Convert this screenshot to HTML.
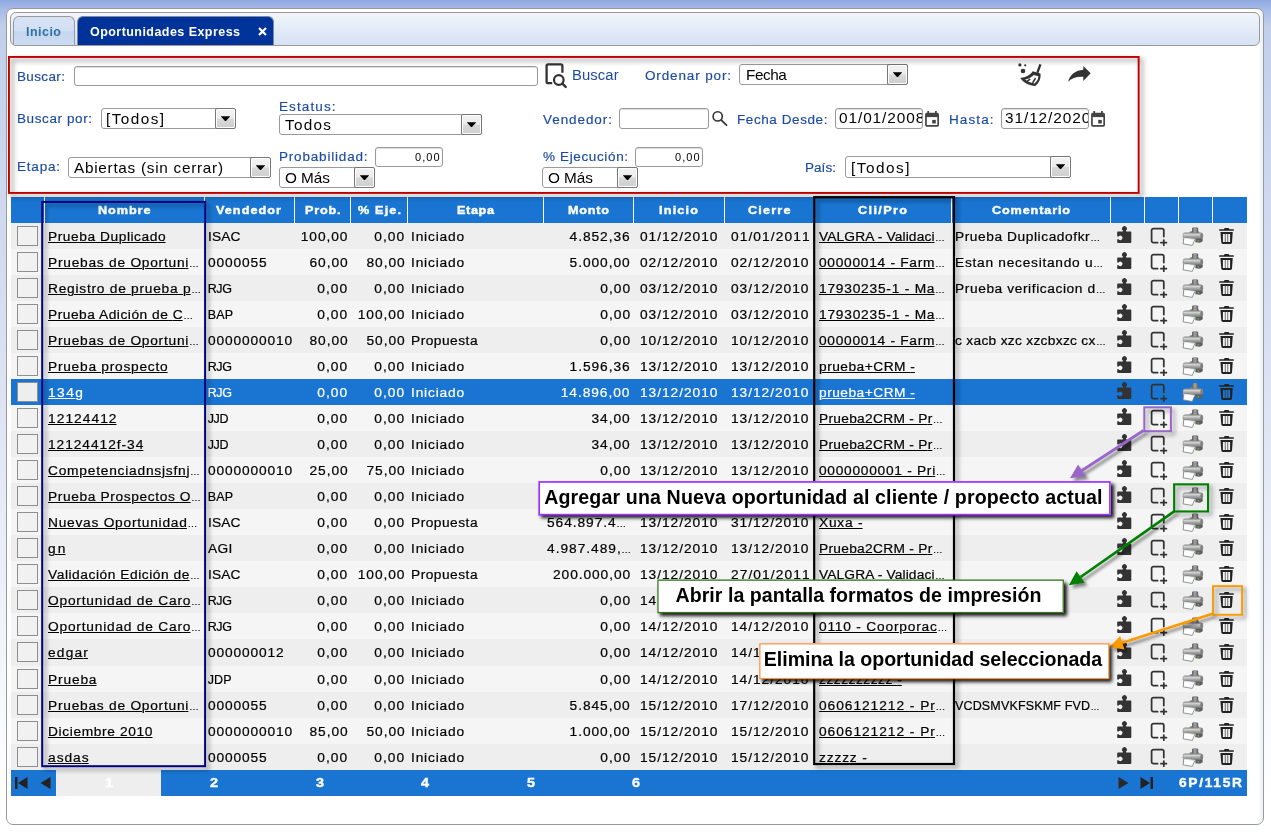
<!DOCTYPE html><html><head><meta charset="utf-8"><title>Oportunidades Express</title><style>
*{box-sizing:border-box;margin:0;padding:0}
html,body{width:1271px;height:832px;overflow:hidden}
body{position:relative;font-family:"Liberation Sans",sans-serif;font-size:12px;color:#000;
 background:linear-gradient(to bottom,#8ea8e1 0px,#a9bce7 10px,#c2cfea 26px,#cfd8ee 200px,#dfe5f4 420px,#f3f5fb 650px,#fff 800px)}
.t{position:absolute;white-space:nowrap;display:block}
.abs{position:absolute}
#panel{position:absolute;left:6px;top:8px;width:1258px;height:817px;background:#fff;border:1px solid #999;border-radius:7px;
 box-shadow:inset -5px 0 3px -2px #eef2f8}
#tabbar{position:absolute;left:10px;top:12px;width:1250px;height:34px;border:1px solid #999;border-radius:6px;
 background:linear-gradient(#f1f5fb,#d6e2f4)}
.tab{position:absolute;top:16px;height:29px;border-radius:6px 6px 0 0}
#tab1{left:13px;width:62px;border:1px solid #999;border-bottom:none;background:linear-gradient(#d7e3f5 0,#d2dff3 48%,#c5d6f0 52%,#cddbf2 100%)}
#tab2{left:77px;width:197px;background:#003399;border:1px solid #7a8aa8;border-bottom:none}
.inp{position:absolute;background:#fff;border:1px solid #9a9a9a;border-radius:3px;box-shadow:inset 0 1px 1px #ddd}
.sel{position:absolute;background:#fff;border:1px solid #9a9a9a;border-radius:3px}
.sel i{position:absolute;right:-1px;top:-1px;bottom:-1px;width:21px;border:1px solid #777;border-right:1.500px solid #777;border-bottom:1.500px solid #777;border-radius:2px;background:linear-gradient(#f3f3f3 0,#ececec 48%,#d9d9d9 52%,#cecece 100%);
 box-shadow:inset 0 0 0 1px #fff}
.sel i:after{content:"";position:absolute;left:4.700px;top:7.300px;width:9.600px;height:5.200px;background:#000;clip-path:polygon(0 0,100% 0,50% 100%)}
.ann{position:absolute;filter:drop-shadow(3px 3px 2px rgba(0,0,0,.45))}
#hdr{position:absolute;left:11px;top:197px;width:1236px;height:26px;background:#1a75d2}
.sep{position:absolute;top:197px;width:1px;height:26px;background:#fff}
.row{position:absolute;left:11px;width:1236px;height:27px}
.r0{background:#eeeeee}.r1{background:#f5f5f5}.rs{background:#1a75d2;color:#fff}
.c{position:absolute;top:1px;height:27px;line-height:27px;white-space:nowrap;font-size:12.5px;-webkit-text-stroke:.2px;transform:scaleX(1.1);transform-origin:0 0}
.cb{position:absolute;left:6px;top:3px;width:21px;height:20px;border:1px solid #8e8e8e;background:#f1f1f1}
.e{font-size:9px;letter-spacing:0;margin-left:.5px}
.z{letter-spacing:0}
.u{text-decoration:underline;text-underline-offset:.5px;text-decoration-thickness:1px}
.callout{position:absolute;background:#fff;box-shadow:3px 3px 3.500px rgba(0,0,0,.9)}
#pag{position:absolute;left:11px;top:770px;width:1236px;height:26px;background:#1a75d2}
svg{position:absolute;overflow:visible}
#root{position:absolute;left:0;top:0;width:1271px;height:832px;will-change:transform}
</style></head><body><div id="root">
<svg width="0" height="0" style="position:absolute"><defs>
<linearGradient id="pg1" x1="0" y1="0" x2="0" y2="1"><stop offset="0" stop-color="#d8d8d8"/><stop offset="1" stop-color="#8d8d8d"/></linearGradient>
<linearGradient id="pg2" x1="0" y1="0" x2="1" y2="0"><stop offset="0" stop-color="#f2f2f2"/><stop offset="1" stop-color="#9a9a9a"/></linearGradient>
<linearGradient id="kg" x1="0" y1="0" x2="1" y2="0"><stop offset="0" stop-color="#5e5e5e"/><stop offset=".5" stop-color="#a8a8a8"/><stop offset="1" stop-color="#5a5a5a"/></linearGradient>
<linearGradient id="bg" x1="0" y1="0" x2="0" y2="1"><stop offset="0" stop-color="#9a9a9a"/><stop offset=".28" stop-color="#d2d2d2"/><stop offset=".65" stop-color="#a2a2a2"/><stop offset="1" stop-color="#7c7c7c"/></linearGradient>
<symbol id="puz" viewBox="0 0 36 26"><path fill="#333" d="M8 7.400H12.900V6.600A2.450 2.450 0 1 1 16 6.600V7.400H20.500A.8.8 0 0 1 21.300 8.200V18.200A.8.8 0 0 1 20.500 19H8A.8.8 0 0 1 7.200 18.200V15.300H8.600A2.200 2.200 0 1 0 8.600 12.500H7.200V8.200A.8.8 0 0 1 8 7.400Z"/></symbol>
<symbol id="new" viewBox="0 0 36 26"><path fill="none" stroke="#333" stroke-width="1.750" stroke-linecap="round" d="M20.800 12.600V6.300A1.800 1.800 0 0 0 19 4.500H10.400A1.800 1.800 0 0 0 8.600 6.300V16.850A1.800 1.800 0 0 0 10.400 18.650H14.600M20.800 16V21.200M17.900 18.650H23.400"/></symbol>
<symbol id="prn" viewBox="0 0 36 26">
 <path fill="#7a7a7a" d="M13 9.200L14.500 7.200H22.500L23.500 9.200Z"/>
 <path fill="url(#kg)" d="M16 8.800V4.600Q16 3 19.100 3Q22.200 3 22.200 4.600V8.800Z"/>
 <rect x="7" y="8.800" width="19.800" height="6" rx="2" fill="url(#bg)" stroke="#808080" stroke-width=".5"/>
 <ellipse cx="25.600" cy="11.800" rx="1.300" ry="2.900" fill="#7d7d7d"/>
 <path fill="#5f5f5f" d="M19.400 14.500H26.700V17.300L24 18.800L19.400 18.200Z"/>
 <rect x="21.700" y="16.100" width="1.300" height="1.500" fill="#6dbb3c"/>
 <path fill="#b5b5b5" d="M7 13H8.200V20H7Z"/>
 <path fill="#fdfdfd" stroke="#7c7c7c" stroke-width=".8" d="M7.900 13.500L19 15L16.300 21.400L7.100 19.900Z"/>
 <path fill="#e3e3e3" d="M8.300 13.700L18.700 15.100L18.300 16L8.300 14.600Z"/>
</symbol>
<symbol id="tr" viewBox="0 0 36 26">
 <path fill="#222" d="M15 5.300Q15 4.050 16.200 4.050H19.100Q20.300 4.050 20.300 5.300H24.300Q24.850 5.300 24.850 5.850V6.700H10.150V5.850Q10.150 5.300 10.700 5.300Z"/>
 <path fill="#222" fill-rule="evenodd" d="M11.400 8.100H23.750L23 18.600Q22.900 20 21.500 20H13.800Q12.400 20 12.300 18.600ZM13.900 10V18H21.100V10Z"/>
 <path fill="#333" fill-opacity=".75" d="M15.800 10H16.700V18H15.800ZM18.300 10H19.200V18H18.300Z"/>
</symbol>
<symbol id="cal" viewBox="0 0 20 20"><path fill="#444" d="M2.300 0.100h1.800v2h-1.800zM10 0.100h1.800v2H10z"/><rect x="0.100" y="1.850" width="13.900" height="13.850" rx="1.600" fill="#444"/><rect x="1.800" y="6.100" width="10.500" height="7.900" fill="#fff"/><rect x="7.200" y="8.900" width="3.600" height="3.600" fill="#444"/></symbol>
</defs></svg>
<div id="panel"></div><div id="tabbar"></div>
<div class="tab" id="tab1"></div><div class="tab" id="tab2"></div>
<span class="t" style="left:26.0px;top:21.9px;font-size:12.5px;line-height:20px;color:#2e73a6;letter-spacing:0.47px;font-weight:bold;">Inicio</span>
<span class="t" style="left:90.0px;top:21.9px;font-size:12.5px;line-height:20px;color:#fff;letter-spacing:0.45px;font-weight:bold;">Oportunidades Express</span>
<svg style="left:258px;top:27px" width="9" height="9" viewBox="0 0 9 9"><path d="M1 1l7 7M8 1l-7 7" stroke="#fff" stroke-width="2.200"/></svg>
<span class="t" style="left:17.0px;top:66.7px;font-size:12.5px;line-height:20px;color:#1c4aa2;letter-spacing:0.34px;transform:scaleX(1.08);transform-origin:0 0;-webkit-text-stroke:.15px;">Buscar:</span>
<div class="inp" style="left:74px;top:66px;width:464px;height:20px"></div>
<svg style="left:536px;top:58px" width="34" height="32" viewBox="0 0 34 32"><path fill="none" stroke="#333" stroke-width="2.300" stroke-linejoin="round" d="M26.400 14.800V7.800A1.500 1.500 0 0 0 24.900 6.300H12.100A1.500 1.500 0 0 0 10.600 7.800V23.700A1.500 1.500 0 0 0 12.100 25.200H16.200"/><circle cx="22.800" cy="22" r="4.800" fill="none" stroke="#333" stroke-width="2.200"/><path d="M26.400 25.600L29.700 28.900" stroke="#333" stroke-width="2.400" stroke-linecap="round"/></svg>
<span class="t" style="left:572.0px;top:64.6px;font-size:14px;line-height:20px;color:#1c4aa2;letter-spacing:0.08px;transform:scaleX(1.06);transform-origin:0 0;">Buscar</span>
<span class="t" style="left:645.0px;top:65.7px;font-size:12.5px;line-height:20px;color:#1c4aa2;letter-spacing:0.80px;transform:scaleX(1.08);transform-origin:0 0;-webkit-text-stroke:.15px;">Ordenar por:</span>
<div class="sel" style="left:739px;top:64px;width:169px;height:21px"><i></i></div>
<span class="t" style="left:745.6px;top:65.1px;font-size:14.2px;line-height:20px;color:#000;letter-spacing:-0.41px;transform:scaleX(1.08);transform-origin:0 0;">Fecha</span>
<svg style="left:1010px;top:58px" width="90" height="34" viewBox="0 0 90 34"><g fill="#333">
<circle cx="9.900" cy="6.900" r="1.600"/><circle cx="15.200" cy="7.300" r="1.100"/><circle cx="13" cy="13" r="2.300"/>
<path d="M29.300 5.900L31.500 6.700L28.400 15.200L26.200 14.400Z"/>
<path fill-rule="evenodd" d="M22.700 13.300L30.400 15.400C31.300 20 29 25 25.300 27.900C19 27.600 13.500 24.600 10.300 19.900C16 19.500 20.500 17 22.700 13.300ZM23.800 17C21.700 19.300 18.400 20.900 15 21.600C17 23.400 20.700 25 24.600 25.400C27 23.400 28.500 20.700 28.300 18.200Z"/>
<path d="M19.600 20.600L20.800 21.600L17 24.600L15.600 23.600ZM24.800 19.800L26.200 20.500L23.300 25.200L21.900 24.500Z"/>
<path d="M73.300 8.100L80.700 15.200L73.300 23V18.800C67 18.300 62 20 58.100 23.700C60 16.500 65.500 12.300 73.300 11.700Z"/></g></svg>
<span class="t" style="left:17.0px;top:109.2px;font-size:12.5px;line-height:20px;color:#1c4aa2;letter-spacing:0.55px;transform:scaleX(1.08);transform-origin:0 0;-webkit-text-stroke:.15px;">Buscar por:</span>
<div class="sel" style="left:101px;top:108px;width:135px;height:21px"><i></i></div>
<span class="t" style="left:106.0px;top:109.4px;font-size:14.2px;line-height:20px;color:#000;letter-spacing:1.33px;transform:scaleX(1.08);transform-origin:0 0;">[Todos]</span>
<span class="t" style="left:279.0px;top:96.7px;font-size:12.5px;line-height:20px;color:#1c4aa2;letter-spacing:1.02px;transform:scaleX(1.08);transform-origin:0 0;-webkit-text-stroke:.15px;">Estatus:</span>
<div class="sel" style="left:279px;top:114px;width:203px;height:21px"><i></i></div>
<span class="t" style="left:285.0px;top:115.1px;font-size:14.2px;line-height:20px;color:#000;letter-spacing:1.18px;transform:scaleX(1.08);transform-origin:0 0;">Todos</span>
<span class="t" style="left:542.5px;top:109.7px;font-size:12.5px;line-height:20px;color:#1c4aa2;letter-spacing:0.86px;transform:scaleX(1.08);transform-origin:0 0;-webkit-text-stroke:.15px;">Vendedor:</span>
<div class="inp" style="left:619px;top:108px;width:90px;height:21px"></div>
<svg style="left:700px;top:104px" width="34" height="30" viewBox="0 0 34 30"><circle cx="17.700" cy="12.400" r="4.600" fill="none" stroke="#333" stroke-width="1.600"/><path d="M21.300 16.200L26.500 21.200" stroke="#333" stroke-width="1.800" stroke-linecap="round"/></svg>
<span class="t" style="left:737.0px;top:109.7px;font-size:12.5px;line-height:20px;color:#1c4aa2;letter-spacing:0.54px;transform:scaleX(1.08);transform-origin:0 0;-webkit-text-stroke:.15px;">Fecha Desde:</span>
<div class="inp" style="left:835px;top:108px;width:88px;height:21px;overflow:hidden"></div>
<div class="abs" style="left:836px;top:109px;width:86px;height:19px;overflow:hidden"><span class="t" style="left:2.7px;top:-0.6px;font-size:14px;line-height:20px;color:#000;letter-spacing:0.83px;transform:scaleX(1.1);transform-origin:0 0;">01/01/2008</span></div>
<svg style="left:925px;top:111px" width="20" height="20"><use href="#cal"/></svg>
<span class="t" style="left:949.0px;top:109.7px;font-size:12.5px;line-height:20px;color:#1c4aa2;letter-spacing:1.02px;transform:scaleX(1.08);transform-origin:0 0;-webkit-text-stroke:.15px;">Hasta:</span>
<div class="inp" style="left:1001px;top:108px;width:88px;height:21px"></div>
<div class="abs" style="left:1002px;top:109px;width:86px;height:19px;overflow:hidden"><span class="t" style="left:2.7px;top:-0.6px;font-size:14px;line-height:20px;color:#000;letter-spacing:0.83px;transform:scaleX(1.1);transform-origin:0 0;">31/12/2020</span></div>
<svg style="left:1091px;top:111px" width="20" height="20"><use href="#cal"/></svg>
<span class="t" style="left:17.0px;top:157.2px;font-size:12.5px;line-height:20px;color:#1c4aa2;letter-spacing:0.74px;transform:scaleX(1.08);transform-origin:0 0;-webkit-text-stroke:.15px;">Etapa:</span>
<div class="sel" style="left:68px;top:157px;width:203px;height:21px"><i></i></div>
<span class="t" style="left:74.0px;top:158.1px;font-size:14.2px;line-height:20px;color:#000;letter-spacing:0.67px;transform:scaleX(1.08);transform-origin:0 0;">Abiertas (sin cerrar)</span>
<span class="t" style="left:279.0px;top:146.7px;font-size:12.5px;line-height:20px;color:#1c4aa2;letter-spacing:0.75px;transform:scaleX(1.08);transform-origin:0 0;-webkit-text-stroke:.15px;">Probabilidad:</span>
<div class="inp" style="left:375px;top:147px;width:68px;height:20px"></div>
<span class="t" style="left:415.0px;top:147.2px;font-size:11px;line-height:20px;color:#000;letter-spacing:1.03px;">0,00</span>
<div class="sel" style="left:279px;top:167px;width:96px;height:21px"><i></i></div>
<span class="t" style="left:285.0px;top:167.6px;font-size:14.2px;line-height:20px;color:#000;letter-spacing:-0.03px;transform:scaleX(1.08);transform-origin:0 0;">O Más</span>
<span class="t" style="left:542.5px;top:146.7px;font-size:12.5px;line-height:20px;color:#1c4aa2;letter-spacing:0.59px;transform:scaleX(1.08);transform-origin:0 0;-webkit-text-stroke:.15px;">% Ejecución:</span>
<div class="inp" style="left:635px;top:147px;width:68px;height:20px"></div>
<span class="t" style="left:675.0px;top:147.2px;font-size:11px;line-height:20px;color:#000;letter-spacing:1.03px;">0,00</span>
<div class="sel" style="left:542px;top:167px;width:96px;height:21px"><i></i></div>
<span class="t" style="left:548.0px;top:167.6px;font-size:14.2px;line-height:20px;color:#000;letter-spacing:-0.03px;transform:scaleX(1.08);transform-origin:0 0;">O Más</span>
<span class="t" style="left:805.0px;top:157.7px;font-size:12.5px;line-height:20px;color:#1c4aa2;letter-spacing:0.05px;transform:scaleX(1.08);transform-origin:0 0;-webkit-text-stroke:.15px;">País:</span>
<div class="sel" style="left:845px;top:156px;width:226px;height:22px"><i></i></div>
<span class="t" style="left:850.5px;top:157.9px;font-size:14.2px;line-height:20px;color:#000;letter-spacing:1.40px;transform:scaleX(1.08);transform-origin:0 0;">[Todos]</span>
<div id="hdr"></div>
<div class="sep" style="left:44px"></div>
<div class="sep" style="left:203.5px"></div>
<div class="sep" style="left:294px"></div>
<div class="sep" style="left:350px"></div>
<div class="sep" style="left:407px"></div>
<div class="sep" style="left:543px"></div>
<div class="sep" style="left:633px"></div>
<div class="sep" style="left:724px"></div>
<div class="sep" style="left:813px"></div>
<div class="sep" style="left:950.5px"></div>
<div class="sep" style="left:1110px"></div>
<div class="sep" style="left:1144px"></div>
<div class="sep" style="left:1178px"></div>
<div class="sep" style="left:1212px"></div>
<span class="t" style="left:97.7px;top:199.7px;font-size:11px;line-height:20px;color:#fff;letter-spacing:0.82px;font-weight:bold;transform:scaleX(1.15);transform-origin:0 0;-webkit-text-stroke:.4px #fff;">Nombre</span>
<span class="t" style="left:216.0px;top:199.7px;font-size:11px;line-height:20px;color:#fff;letter-spacing:0.91px;font-weight:bold;transform:scaleX(1.15);transform-origin:0 0;-webkit-text-stroke:.4px #fff;">Vendedor</span>
<span class="t" style="left:304.5px;top:199.7px;font-size:11px;line-height:20px;color:#fff;letter-spacing:0.69px;font-weight:bold;transform:scaleX(1.15);transform-origin:0 0;-webkit-text-stroke:.4px #fff;">Prob.</span>
<span class="t" style="left:357.5px;top:199.7px;font-size:11px;line-height:20px;color:#fff;letter-spacing:1.00px;font-weight:bold;transform:scaleX(1.15);transform-origin:0 0;-webkit-text-stroke:.4px #fff;">% Eje.</span>
<span class="t" style="left:456.5px;top:199.7px;font-size:11px;line-height:20px;color:#fff;letter-spacing:0.55px;font-weight:bold;transform:scaleX(1.15);transform-origin:0 0;-webkit-text-stroke:.4px #fff;">Etapa</span>
<span class="t" style="left:568.0px;top:199.7px;font-size:11px;line-height:20px;color:#fff;letter-spacing:0.67px;font-weight:bold;transform:scaleX(1.15);transform-origin:0 0;-webkit-text-stroke:.4px #fff;">Monto</span>
<span class="t" style="left:659.0px;top:199.7px;font-size:11px;line-height:20px;color:#fff;letter-spacing:1.04px;font-weight:bold;transform:scaleX(1.15);transform-origin:0 0;-webkit-text-stroke:.4px #fff;">Inicio</span>
<span class="t" style="left:747.5px;top:199.7px;font-size:11px;line-height:20px;color:#fff;letter-spacing:1.03px;font-weight:bold;transform:scaleX(1.15);transform-origin:0 0;-webkit-text-stroke:.4px #fff;">Cierre</span>
<span class="t" style="left:858.0px;top:199.7px;font-size:11px;line-height:20px;color:#fff;letter-spacing:1.19px;font-weight:bold;transform:scaleX(1.15);transform-origin:0 0;-webkit-text-stroke:.4px #fff;">Cli/Pro</span>
<span class="t" style="left:991.5px;top:199.7px;font-size:11px;line-height:20px;color:#fff;letter-spacing:0.75px;font-weight:bold;transform:scaleX(1.15);transform-origin:0 0;-webkit-text-stroke:.4px #fff;">Comentario</span>
<div class="row r0" style="top:223.00px"><div class="cb"></div><div class="c" style="left:36.7px;letter-spacing:0.50px;"><span class="u">Prueba Duplicad<span class="z">o</span></span></div><div class="c" style="left:196.8px;letter-spacing:0.12px;">ISA<span class="z">C</span></div><div class="c" style="right:899.7px;letter-spacing:0.83px;transform-origin:100% 0;">100,0<span class="z">0</span></div><div class="c" style="right:842.6px;letter-spacing:0.91px;transform-origin:100% 0;">0,0<span class="z">0</span></div><div class="c" style="left:399.7px;letter-spacing:0.75px;">Iniciad<span class="z">o</span></div><div class="c" style="right:617.2px;letter-spacing:0.87px;transform-origin:100% 0;">4.852,3<span class="z">6</span></div><div class="c" style="left:629.0px;letter-spacing:0.87px;">01/12/201<span class="z">0</span></div><div class="c" style="left:720.2px;letter-spacing:0.98px;">01/01/201<span class="z">1</span></div><div class="c" style="left:807.8px;letter-spacing:0.12px;"><span class="u">VALGRA - Validac<span class="z">i</span></span><span class="e">…</span></div><div class="c" style="left:944.0px;letter-spacing:0.51px;"><span>Prueba Duplicadofk<span class="z">r</span></span><span class="e">…</span></div><svg style="left:1099px;top:1px" width="36" height="26"><use href="#puz"/></svg><svg style="left:1132px;top:1px" width="36" height="26"><use href="#new"/></svg><svg style="left:1165px;top:1px" width="36" height="26"><use href="#prn"/></svg><svg style="left:1198px;top:1px" width="36" height="26"><use href="#tr"/></svg></div>
<div class="row r1" style="top:249.03px"><div class="cb"></div><div class="c" style="left:36.7px;letter-spacing:0.68px;"><span class="u">Pruebas de Oportun<span class="z">i</span></span><span class="e">…</span></div><div class="c" style="left:196.8px;letter-spacing:0.77px;">000005<span class="z">5</span></div><div class="c" style="right:899.7px;letter-spacing:0.86px;transform-origin:100% 0;">60,0<span class="z">0</span></div><div class="c" style="right:842.6px;letter-spacing:0.86px;transform-origin:100% 0;">80,0<span class="z">0</span></div><div class="c" style="left:399.7px;letter-spacing:0.75px;">Iniciad<span class="z">o</span></div><div class="c" style="right:617.2px;letter-spacing:0.87px;transform-origin:100% 0;">5.000,0<span class="z">0</span></div><div class="c" style="left:629.0px;letter-spacing:0.87px;">02/12/201<span class="z">0</span></div><div class="c" style="left:720.2px;letter-spacing:0.87px;">02/12/201<span class="z">0</span></div><div class="c" style="left:807.8px;letter-spacing:0.65px;"><span class="u">00000014 - Far<span class="z">m</span></span><span class="e">…</span></div><div class="c" style="left:944.0px;letter-spacing:0.66px;"><span>Estan necesitando <span class="z">u</span></span><span class="e">…</span></div><svg style="left:1099px;top:1px" width="36" height="26"><use href="#puz"/></svg><svg style="left:1132px;top:1px" width="36" height="26"><use href="#new"/></svg><svg style="left:1165px;top:1px" width="36" height="26"><use href="#prn"/></svg><svg style="left:1198px;top:1px" width="36" height="26"><use href="#tr"/></svg></div>
<div class="row r0" style="top:275.06px"><div class="cb"></div><div class="c" style="left:36.7px;letter-spacing:0.68px;"><span class="u">Registro de prueba <span class="z">p</span></span><span class="e">…</span></div><div class="c" style="left:196.8px;letter-spacing:-0.45px;transform:none;">RJ<span class="z">G</span></div><div class="c" style="right:899.7px;letter-spacing:0.91px;transform-origin:100% 0;">0,0<span class="z">0</span></div><div class="c" style="right:842.6px;letter-spacing:0.91px;transform-origin:100% 0;">0,0<span class="z">0</span></div><div class="c" style="left:399.7px;letter-spacing:0.75px;">Iniciad<span class="z">o</span></div><div class="c" style="right:617.2px;letter-spacing:0.91px;transform-origin:100% 0;">0,0<span class="z">0</span></div><div class="c" style="left:629.0px;letter-spacing:0.87px;">03/12/201<span class="z">0</span></div><div class="c" style="left:720.2px;letter-spacing:0.87px;">03/12/201<span class="z">0</span></div><div class="c" style="left:807.8px;letter-spacing:0.70px;"><span class="u">17930235-1 - M<span class="z">a</span></span><span class="e">…</span></div><div class="c" style="left:944.0px;letter-spacing:0.53px;"><span>Prueba verificacion <span class="z">d</span></span><span class="e">…</span></div><svg style="left:1099px;top:1px" width="36" height="26"><use href="#puz"/></svg><svg style="left:1132px;top:1px" width="36" height="26"><use href="#new"/></svg><svg style="left:1165px;top:1px" width="36" height="26"><use href="#prn"/></svg><svg style="left:1198px;top:1px" width="36" height="26"><use href="#tr"/></svg></div>
<div class="row r1" style="top:301.09px"><div class="cb"></div><div class="c" style="left:36.7px;letter-spacing:0.47px;"><span class="u">Prueba Adición de <span class="z">C</span></span><span class="e">…</span></div><div class="c" style="left:196.8px;letter-spacing:0.18px;transform:none;">BA<span class="z">P</span></div><div class="c" style="right:899.7px;letter-spacing:0.91px;transform-origin:100% 0;">0,0<span class="z">0</span></div><div class="c" style="right:842.6px;letter-spacing:0.83px;transform-origin:100% 0;">100,0<span class="z">0</span></div><div class="c" style="left:399.7px;letter-spacing:0.75px;">Iniciad<span class="z">o</span></div><div class="c" style="right:617.2px;letter-spacing:0.91px;transform-origin:100% 0;">0,0<span class="z">0</span></div><div class="c" style="left:629.0px;letter-spacing:0.87px;">03/12/201<span class="z">0</span></div><div class="c" style="left:720.2px;letter-spacing:0.87px;">03/12/201<span class="z">0</span></div><div class="c" style="left:807.8px;letter-spacing:0.70px;"><span class="u">17930235-1 - M<span class="z">a</span></span><span class="e">…</span></div><svg style="left:1099px;top:1px" width="36" height="26"><use href="#puz"/></svg><svg style="left:1132px;top:1px" width="36" height="26"><use href="#new"/></svg><svg style="left:1165px;top:1px" width="36" height="26"><use href="#prn"/></svg><svg style="left:1198px;top:1px" width="36" height="26"><use href="#tr"/></svg></div>
<div class="row r0" style="top:327.12px"><div class="cb"></div><div class="c" style="left:36.7px;letter-spacing:0.68px;"><span class="u">Pruebas de Oportun<span class="z">i</span></span><span class="e">…</span></div><div class="c" style="left:196.8px;letter-spacing:0.77px;">000000001<span class="z">0</span></div><div class="c" style="right:899.7px;letter-spacing:0.86px;transform-origin:100% 0;">80,0<span class="z">0</span></div><div class="c" style="right:842.6px;letter-spacing:0.86px;transform-origin:100% 0;">50,0<span class="z">0</span></div><div class="c" style="left:399.7px;letter-spacing:0.44px;">Propuest<span class="z">a</span></div><div class="c" style="right:617.2px;letter-spacing:0.91px;transform-origin:100% 0;">0,0<span class="z">0</span></div><div class="c" style="left:629.0px;letter-spacing:0.87px;">10/12/201<span class="z">0</span></div><div class="c" style="left:720.2px;letter-spacing:0.87px;">10/12/201<span class="z">0</span></div><div class="c" style="left:807.8px;letter-spacing:0.65px;"><span class="u">00000014 - Far<span class="z">m</span></span><span class="e">…</span></div><div class="c" style="left:944.0px;letter-spacing:0.27px;"><span>c xacb xzc xzcbxzc c<span class="z">x</span></span><span class="e">…</span></div><svg style="left:1099px;top:1px" width="36" height="26"><use href="#puz"/></svg><svg style="left:1132px;top:1px" width="36" height="26"><use href="#new"/></svg><svg style="left:1165px;top:1px" width="36" height="26"><use href="#prn"/></svg><svg style="left:1198px;top:1px" width="36" height="26"><use href="#tr"/></svg></div>
<div class="row r1" style="top:353.15px"><div class="cb"></div><div class="c" style="left:36.7px;letter-spacing:0.67px;"><span class="u">Prueba prospect<span class="z">o</span></span></div><div class="c" style="left:196.8px;letter-spacing:-0.45px;transform:none;">RJ<span class="z">G</span></div><div class="c" style="right:899.7px;letter-spacing:0.91px;transform-origin:100% 0;">0,0<span class="z">0</span></div><div class="c" style="right:842.6px;letter-spacing:0.91px;transform-origin:100% 0;">0,0<span class="z">0</span></div><div class="c" style="left:399.7px;letter-spacing:0.75px;">Iniciad<span class="z">o</span></div><div class="c" style="right:617.2px;letter-spacing:0.87px;transform-origin:100% 0;">1.596,3<span class="z">6</span></div><div class="c" style="left:629.0px;letter-spacing:0.87px;">13/12/201<span class="z">0</span></div><div class="c" style="left:720.2px;letter-spacing:0.87px;">13/12/201<span class="z">0</span></div><div class="c" style="left:807.8px;letter-spacing:0.44px;"><span class="u">prueba+CRM <span class="z">-</span></span></div><svg style="left:1099px;top:1px" width="36" height="26"><use href="#puz"/></svg><svg style="left:1132px;top:1px" width="36" height="26"><use href="#new"/></svg><svg style="left:1165px;top:1px" width="36" height="26"><use href="#prn"/></svg><svg style="left:1198px;top:1px" width="36" height="26"><use href="#tr"/></svg></div>
<div class="row rs" style="top:379.18px"><div class="cb" style="background:#eee"></div><div class="c" style="left:36.7px;letter-spacing:1.31px;"><span class="u">134<span class="z">g</span></span></div><div class="c" style="left:196.8px;letter-spacing:-0.45px;transform:none;">RJ<span class="z">G</span></div><div class="c" style="right:899.7px;letter-spacing:0.91px;transform-origin:100% 0;">0,0<span class="z">0</span></div><div class="c" style="right:842.6px;letter-spacing:0.91px;transform-origin:100% 0;">0,0<span class="z">0</span></div><div class="c" style="left:399.7px;letter-spacing:0.75px;">Iniciad<span class="z">o</span></div><div class="c" style="right:617.2px;letter-spacing:0.85px;transform-origin:100% 0;">14.896,0<span class="z">0</span></div><div class="c" style="left:629.0px;letter-spacing:0.87px;">13/12/201<span class="z">0</span></div><div class="c" style="left:720.2px;letter-spacing:0.87px;">13/12/201<span class="z">0</span></div><div class="c" style="left:807.8px;letter-spacing:0.44px;"><span class="u">prueba+CRM <span class="z">-</span></span></div><svg style="left:1099px;top:1px" width="36" height="26"><use href="#puz"/></svg><svg style="left:1132px;top:1px" width="36" height="26"><use href="#new"/></svg><svg style="left:1165px;top:1px" width="36" height="26"><use href="#prn"/></svg><svg style="left:1198px;top:1px" width="36" height="26"><use href="#tr"/></svg></div>
<div class="row r1" style="top:405.21px"><div class="cb"></div><div class="c" style="left:36.7px;letter-spacing:0.95px;"><span class="u">1212441<span class="z">2</span></span></div><div class="c" style="left:196.8px;letter-spacing:-0.45px;transform:none;">JJ<span class="z">D</span></div><div class="c" style="right:899.7px;letter-spacing:0.91px;transform-origin:100% 0;">0,0<span class="z">0</span></div><div class="c" style="right:842.6px;letter-spacing:0.91px;transform-origin:100% 0;">0,0<span class="z">0</span></div><div class="c" style="left:399.7px;letter-spacing:0.75px;">Iniciad<span class="z">o</span></div><div class="c" style="right:617.2px;letter-spacing:0.86px;transform-origin:100% 0;">34,0<span class="z">0</span></div><div class="c" style="left:629.0px;letter-spacing:0.87px;">13/12/201<span class="z">0</span></div><div class="c" style="left:720.2px;letter-spacing:0.87px;">13/12/201<span class="z">0</span></div><div class="c" style="left:807.8px;letter-spacing:0.26px;"><span class="u">Prueba2CRM - P<span class="z">r</span></span><span class="e">…</span></div><svg style="left:1099px;top:1px" width="36" height="26"><use href="#puz"/></svg><svg style="left:1132px;top:1px" width="36" height="26"><use href="#new"/></svg><svg style="left:1165px;top:1px" width="36" height="26"><use href="#prn"/></svg><svg style="left:1198px;top:1px" width="36" height="26"><use href="#tr"/></svg></div>
<div class="row r0" style="top:431.24px"><div class="cb"></div><div class="c" style="left:36.7px;letter-spacing:0.86px;"><span class="u">12124412f-3<span class="z">4</span></span></div><div class="c" style="left:196.8px;letter-spacing:-0.45px;transform:none;">JJ<span class="z">D</span></div><div class="c" style="right:899.7px;letter-spacing:0.91px;transform-origin:100% 0;">0,0<span class="z">0</span></div><div class="c" style="right:842.6px;letter-spacing:0.91px;transform-origin:100% 0;">0,0<span class="z">0</span></div><div class="c" style="left:399.7px;letter-spacing:0.75px;">Iniciad<span class="z">o</span></div><div class="c" style="right:617.2px;letter-spacing:0.86px;transform-origin:100% 0;">34,0<span class="z">0</span></div><div class="c" style="left:629.0px;letter-spacing:0.87px;">13/12/201<span class="z">0</span></div><div class="c" style="left:720.2px;letter-spacing:0.87px;">13/12/201<span class="z">0</span></div><div class="c" style="left:807.8px;letter-spacing:0.26px;"><span class="u">Prueba2CRM - P<span class="z">r</span></span><span class="e">…</span></div><svg style="left:1099px;top:1px" width="36" height="26"><use href="#puz"/></svg><svg style="left:1132px;top:1px" width="36" height="26"><use href="#new"/></svg><svg style="left:1165px;top:1px" width="36" height="26"><use href="#prn"/></svg><svg style="left:1198px;top:1px" width="36" height="26"><use href="#tr"/></svg></div>
<div class="row r1" style="top:457.27px"><div class="cb"></div><div class="c" style="left:36.7px;letter-spacing:0.70px;"><span class="u">Competenciadnsjsfn<span class="z">j</span></span><span class="e">…</span></div><div class="c" style="left:196.8px;letter-spacing:0.77px;">000000001<span class="z">0</span></div><div class="c" style="right:899.7px;letter-spacing:0.86px;transform-origin:100% 0;">25,0<span class="z">0</span></div><div class="c" style="right:842.6px;letter-spacing:0.86px;transform-origin:100% 0;">75,0<span class="z">0</span></div><div class="c" style="left:399.7px;letter-spacing:0.75px;">Iniciad<span class="z">o</span></div><div class="c" style="right:617.2px;letter-spacing:0.91px;transform-origin:100% 0;">0,0<span class="z">0</span></div><div class="c" style="left:629.0px;letter-spacing:0.87px;">13/12/201<span class="z">0</span></div><div class="c" style="left:720.2px;letter-spacing:0.87px;">13/12/201<span class="z">0</span></div><div class="c" style="left:807.8px;letter-spacing:0.65px;"><span class="u">0000000001 - Pr<span class="z">i</span></span><span class="e">…</span></div><svg style="left:1099px;top:1px" width="36" height="26"><use href="#puz"/></svg><svg style="left:1132px;top:1px" width="36" height="26"><use href="#new"/></svg><svg style="left:1165px;top:1px" width="36" height="26"><use href="#prn"/></svg><svg style="left:1198px;top:1px" width="36" height="26"><use href="#tr"/></svg></div>
<div class="row r0" style="top:483.30px"><div class="cb"></div><div class="c" style="left:36.7px;letter-spacing:0.56px;"><span class="u">Prueba Prospectos <span class="z">O</span></span><span class="e">…</span></div><div class="c" style="left:196.8px;letter-spacing:0.18px;transform:none;">BA<span class="z">P</span></div><div class="c" style="right:899.7px;letter-spacing:0.91px;transform-origin:100% 0;">0,0<span class="z">0</span></div><div class="c" style="right:842.6px;letter-spacing:0.91px;transform-origin:100% 0;">0,0<span class="z">0</span></div><div class="c" style="left:399.7px;letter-spacing:0.75px;">Iniciad<span class="z">o</span></div><div class="c" style="right:617.2px;letter-spacing:0.91px;transform-origin:100% 0;">0,0<span class="z">0</span></div><div class="c" style="left:629.0px;letter-spacing:0.87px;">13/12/201<span class="z">0</span></div><div class="c" style="left:720.2px;letter-spacing:0.87px;">13/12/201<span class="z">0</span></div><div class="c" style="left:807.8px;letter-spacing:0.26px;"><span class="u">Prueba2CRM - P<span class="z">r</span></span><span class="e">…</span></div><svg style="left:1099px;top:1px" width="36" height="26"><use href="#puz"/></svg><svg style="left:1132px;top:1px" width="36" height="26"><use href="#new"/></svg><svg style="left:1165px;top:1px" width="36" height="26"><use href="#prn"/></svg><svg style="left:1198px;top:1px" width="36" height="26"><use href="#tr"/></svg></div>
<div class="row r1" style="top:509.33px"><div class="cb"></div><div class="c" style="left:36.7px;letter-spacing:0.68px;"><span class="u">Nuevas Oportunida<span class="z">d</span></span><span class="e">…</span></div><div class="c" style="left:196.8px;letter-spacing:0.12px;">ISA<span class="z">C</span></div><div class="c" style="right:899.7px;letter-spacing:0.91px;transform-origin:100% 0;">0,0<span class="z">0</span></div><div class="c" style="right:842.6px;letter-spacing:0.91px;transform-origin:100% 0;">0,0<span class="z">0</span></div><div class="c" style="left:399.7px;letter-spacing:0.44px;">Propuest<span class="z">a</span></div><div class="c" style="left:535.8px;letter-spacing:0.85px;"><span>564.897.<span class="z">4</span></span><span class="e">…</span></div><div class="c" style="left:629.0px;letter-spacing:0.87px;">13/12/201<span class="z">0</span></div><div class="c" style="left:720.2px;letter-spacing:0.87px;">31/12/201<span class="z">0</span></div><div class="c" style="left:807.8px;letter-spacing:0.70px;"><span class="u">Xuxa <span class="z">-</span></span></div><svg style="left:1099px;top:1px" width="36" height="26"><use href="#puz"/></svg><svg style="left:1132px;top:1px" width="36" height="26"><use href="#new"/></svg><svg style="left:1165px;top:1px" width="36" height="26"><use href="#prn"/></svg><svg style="left:1198px;top:1px" width="36" height="26"><use href="#tr"/></svg></div>
<div class="row r0" style="top:535.36px"><div class="cb"></div><div class="c" style="left:36.7px;letter-spacing:2.01px;"><span class="u">g<span class="z">n</span></span></div><div class="c" style="left:196.8px;letter-spacing:0.31px;">AG<span class="z">I</span></div><div class="c" style="right:899.7px;letter-spacing:0.91px;transform-origin:100% 0;">0,0<span class="z">0</span></div><div class="c" style="right:842.6px;letter-spacing:0.91px;transform-origin:100% 0;">0,0<span class="z">0</span></div><div class="c" style="left:399.7px;letter-spacing:0.75px;">Iniciad<span class="z">o</span></div><div class="c" style="left:535.8px;letter-spacing:0.89px;"><span>4.987.489<span class="z">,</span></span><span class="e">…</span></div><div class="c" style="left:629.0px;letter-spacing:0.87px;">13/12/201<span class="z">0</span></div><div class="c" style="left:720.2px;letter-spacing:0.87px;">13/12/201<span class="z">0</span></div><div class="c" style="left:807.8px;letter-spacing:0.26px;"><span class="u">Prueba2CRM - P<span class="z">r</span></span><span class="e">…</span></div><svg style="left:1099px;top:1px" width="36" height="26"><use href="#puz"/></svg><svg style="left:1132px;top:1px" width="36" height="26"><use href="#new"/></svg><svg style="left:1165px;top:1px" width="36" height="26"><use href="#prn"/></svg><svg style="left:1198px;top:1px" width="36" height="26"><use href="#tr"/></svg></div>
<div class="row r1" style="top:561.39px"><div class="cb"></div><div class="c" style="left:36.7px;letter-spacing:0.50px;"><span class="u">Validación Edición d<span class="z">e</span></span><span class="e">…</span></div><div class="c" style="left:196.8px;letter-spacing:0.12px;">ISA<span class="z">C</span></div><div class="c" style="right:899.7px;letter-spacing:0.91px;transform-origin:100% 0;">0,0<span class="z">0</span></div><div class="c" style="right:842.6px;letter-spacing:0.83px;transform-origin:100% 0;">100,0<span class="z">0</span></div><div class="c" style="left:399.7px;letter-spacing:0.44px;">Propuest<span class="z">a</span></div><div class="c" style="right:617.2px;letter-spacing:0.84px;transform-origin:100% 0;">200.000,0<span class="z">0</span></div><div class="c" style="left:629.0px;letter-spacing:0.87px;">13/12/201<span class="z">0</span></div><div class="c" style="left:720.2px;letter-spacing:0.98px;">27/01/201<span class="z">1</span></div><div class="c" style="left:807.8px;letter-spacing:0.12px;"><span class="u">VALGRA - Validac<span class="z">i</span></span><span class="e">…</span></div><svg style="left:1099px;top:1px" width="36" height="26"><use href="#puz"/></svg><svg style="left:1132px;top:1px" width="36" height="26"><use href="#new"/></svg><svg style="left:1165px;top:1px" width="36" height="26"><use href="#prn"/></svg><svg style="left:1198px;top:1px" width="36" height="26"><use href="#tr"/></svg></div>
<div class="row r0" style="top:587.42px"><div class="cb"></div><div class="c" style="left:36.7px;letter-spacing:0.71px;"><span class="u">Oportunidad de Car<span class="z">o</span></span><span class="e">…</span></div><div class="c" style="left:196.8px;letter-spacing:-0.45px;transform:none;">RJ<span class="z">G</span></div><div class="c" style="right:899.7px;letter-spacing:0.91px;transform-origin:100% 0;">0,0<span class="z">0</span></div><div class="c" style="right:842.6px;letter-spacing:0.91px;transform-origin:100% 0;">0,0<span class="z">0</span></div><div class="c" style="left:399.7px;letter-spacing:0.75px;">Iniciad<span class="z">o</span></div><div class="c" style="right:617.2px;letter-spacing:0.91px;transform-origin:100% 0;">0,0<span class="z">0</span></div><div class="c" style="left:629.0px;letter-spacing:0.87px;">14/12/201<span class="z">0</span></div><div class="c" style="left:720.2px;letter-spacing:0.87px;">14/12/201<span class="z">0</span></div><div class="c" style="left:807.8px;letter-spacing:0.72px;"><span class="u">0110 - Coorpora<span class="z">c</span></span><span class="e">…</span></div><svg style="left:1099px;top:1px" width="36" height="26"><use href="#puz"/></svg><svg style="left:1132px;top:1px" width="36" height="26"><use href="#new"/></svg><svg style="left:1165px;top:1px" width="36" height="26"><use href="#prn"/></svg><svg style="left:1198px;top:1px" width="36" height="26"><use href="#tr"/></svg></div>
<div class="row r1" style="top:613.45px"><div class="cb"></div><div class="c" style="left:36.7px;letter-spacing:0.71px;"><span class="u">Oportunidad de Car<span class="z">o</span></span><span class="e">…</span></div><div class="c" style="left:196.8px;letter-spacing:-0.45px;transform:none;">RJ<span class="z">G</span></div><div class="c" style="right:899.7px;letter-spacing:0.91px;transform-origin:100% 0;">0,0<span class="z">0</span></div><div class="c" style="right:842.6px;letter-spacing:0.91px;transform-origin:100% 0;">0,0<span class="z">0</span></div><div class="c" style="left:399.7px;letter-spacing:0.75px;">Iniciad<span class="z">o</span></div><div class="c" style="right:617.2px;letter-spacing:0.91px;transform-origin:100% 0;">0,0<span class="z">0</span></div><div class="c" style="left:629.0px;letter-spacing:0.87px;">14/12/201<span class="z">0</span></div><div class="c" style="left:720.2px;letter-spacing:0.87px;">14/12/201<span class="z">0</span></div><div class="c" style="left:807.8px;letter-spacing:0.72px;"><span class="u">0110 - Coorpora<span class="z">c</span></span><span class="e">…</span></div><svg style="left:1099px;top:1px" width="36" height="26"><use href="#puz"/></svg><svg style="left:1132px;top:1px" width="36" height="26"><use href="#new"/></svg><svg style="left:1165px;top:1px" width="36" height="26"><use href="#prn"/></svg><svg style="left:1198px;top:1px" width="36" height="26"><use href="#tr"/></svg></div>
<div class="row r0" style="top:639.48px"><div class="cb"></div><div class="c" style="left:36.7px;letter-spacing:1.08px;"><span class="u">edga<span class="z">r</span></span></div><div class="c" style="left:196.8px;letter-spacing:0.77px;">00000001<span class="z">2</span></div><div class="c" style="right:899.7px;letter-spacing:0.91px;transform-origin:100% 0;">0,0<span class="z">0</span></div><div class="c" style="right:842.6px;letter-spacing:0.91px;transform-origin:100% 0;">0,0<span class="z">0</span></div><div class="c" style="left:399.7px;letter-spacing:0.75px;">Iniciad<span class="z">o</span></div><div class="c" style="right:617.2px;letter-spacing:0.91px;transform-origin:100% 0;">0,0<span class="z">0</span></div><div class="c" style="left:629.0px;letter-spacing:0.87px;">14/12/201<span class="z">0</span></div><div class="c" style="left:720.2px;letter-spacing:0.87px;">14/12/201<span class="z">0</span></div><div class="c" style="left:807.8px;letter-spacing:0.46px;"><span class="u">zzzzzzzzzz <span class="z">-</span></span></div><svg style="left:1099px;top:1px" width="36" height="26"><use href="#puz"/></svg><svg style="left:1132px;top:1px" width="36" height="26"><use href="#new"/></svg><svg style="left:1165px;top:1px" width="36" height="26"><use href="#prn"/></svg><svg style="left:1198px;top:1px" width="36" height="26"><use href="#tr"/></svg></div>
<div class="row r1" style="top:665.51px"><div class="cb"></div><div class="c" style="left:36.7px;letter-spacing:0.76px;"><span class="u">Prueb<span class="z">a</span></span></div><div class="c" style="left:196.8px;letter-spacing:0.02px;transform:none;">JD<span class="z">P</span></div><div class="c" style="right:899.7px;letter-spacing:0.91px;transform-origin:100% 0;">0,0<span class="z">0</span></div><div class="c" style="right:842.6px;letter-spacing:0.91px;transform-origin:100% 0;">0,0<span class="z">0</span></div><div class="c" style="left:399.7px;letter-spacing:0.75px;">Iniciad<span class="z">o</span></div><div class="c" style="right:617.2px;letter-spacing:0.91px;transform-origin:100% 0;">0,0<span class="z">0</span></div><div class="c" style="left:629.0px;letter-spacing:0.87px;">14/12/201<span class="z">0</span></div><div class="c" style="left:720.2px;letter-spacing:0.87px;">14/12/201<span class="z">0</span></div><div class="c" style="left:807.8px;letter-spacing:0.46px;"><span class="u">zzzzzzzzzz <span class="z">-</span></span></div><svg style="left:1099px;top:1px" width="36" height="26"><use href="#puz"/></svg><svg style="left:1132px;top:1px" width="36" height="26"><use href="#new"/></svg><svg style="left:1165px;top:1px" width="36" height="26"><use href="#prn"/></svg><svg style="left:1198px;top:1px" width="36" height="26"><use href="#tr"/></svg></div>
<div class="row r0" style="top:691.54px"><div class="cb"></div><div class="c" style="left:36.7px;letter-spacing:0.68px;"><span class="u">Pruebas de Oportun<span class="z">i</span></span><span class="e">…</span></div><div class="c" style="left:196.8px;letter-spacing:0.77px;">000005<span class="z">5</span></div><div class="c" style="right:899.7px;letter-spacing:0.91px;transform-origin:100% 0;">0,0<span class="z">0</span></div><div class="c" style="right:842.6px;letter-spacing:0.91px;transform-origin:100% 0;">0,0<span class="z">0</span></div><div class="c" style="left:399.7px;letter-spacing:0.75px;">Iniciad<span class="z">o</span></div><div class="c" style="right:617.2px;letter-spacing:0.87px;transform-origin:100% 0;">5.845,0<span class="z">0</span></div><div class="c" style="left:629.0px;letter-spacing:0.87px;">15/12/201<span class="z">0</span></div><div class="c" style="left:720.2px;letter-spacing:0.87px;">17/12/201<span class="z">0</span></div><div class="c" style="left:807.8px;letter-spacing:0.87px;"><span class="u">0606121212 - P<span class="z">r</span></span><span class="e">…</span></div><div class="c" style="left:944.0px;letter-spacing:0.16px;transform:none;"><span>VCDSMVKFSKMF FV<span class="z">D</span></span><span class="e">…</span></div><svg style="left:1099px;top:1px" width="36" height="26"><use href="#puz"/></svg><svg style="left:1132px;top:1px" width="36" height="26"><use href="#new"/></svg><svg style="left:1165px;top:1px" width="36" height="26"><use href="#prn"/></svg><svg style="left:1198px;top:1px" width="36" height="26"><use href="#tr"/></svg></div>
<div class="row r1" style="top:717.57px"><div class="cb"></div><div class="c" style="left:36.7px;letter-spacing:0.57px;"><span class="u">Diciembre 201<span class="z">0</span></span></div><div class="c" style="left:196.8px;letter-spacing:0.77px;">000000001<span class="z">0</span></div><div class="c" style="right:899.7px;letter-spacing:0.86px;transform-origin:100% 0;">85,0<span class="z">0</span></div><div class="c" style="right:842.6px;letter-spacing:0.86px;transform-origin:100% 0;">50,0<span class="z">0</span></div><div class="c" style="left:399.7px;letter-spacing:0.75px;">Iniciad<span class="z">o</span></div><div class="c" style="right:617.2px;letter-spacing:0.87px;transform-origin:100% 0;">1.000,0<span class="z">0</span></div><div class="c" style="left:629.0px;letter-spacing:0.87px;">15/12/201<span class="z">0</span></div><div class="c" style="left:720.2px;letter-spacing:0.87px;">15/12/201<span class="z">0</span></div><div class="c" style="left:807.8px;letter-spacing:0.87px;"><span class="u">0606121212 - P<span class="z">r</span></span><span class="e">…</span></div><svg style="left:1099px;top:1px" width="36" height="26"><use href="#puz"/></svg><svg style="left:1132px;top:1px" width="36" height="26"><use href="#new"/></svg><svg style="left:1165px;top:1px" width="36" height="26"><use href="#prn"/></svg><svg style="left:1198px;top:1px" width="36" height="26"><use href="#tr"/></svg></div>
<div class="row r0" style="top:743.60px"><div class="cb"></div><div class="c" style="left:36.7px;letter-spacing:0.89px;"><span class="u">asda<span class="z">s</span></span></div><div class="c" style="left:196.8px;letter-spacing:0.77px;">000005<span class="z">5</span></div><div class="c" style="right:899.7px;letter-spacing:0.91px;transform-origin:100% 0;">0,0<span class="z">0</span></div><div class="c" style="right:842.6px;letter-spacing:0.91px;transform-origin:100% 0;">0,0<span class="z">0</span></div><div class="c" style="left:399.7px;letter-spacing:0.75px;">Iniciad<span class="z">o</span></div><div class="c" style="right:617.2px;letter-spacing:0.91px;transform-origin:100% 0;">0,0<span class="z">0</span></div><div class="c" style="left:629.0px;letter-spacing:0.87px;">15/12/201<span class="z">0</span></div><div class="c" style="left:720.2px;letter-spacing:0.87px;">15/12/201<span class="z">0</span></div><div class="c" style="left:807.8px;letter-spacing:0.76px;"><span class="u">zzzzz <span class="z">-</span></span></div><svg style="left:1099px;top:1px" width="36" height="26"><use href="#puz"/></svg><svg style="left:1132px;top:1px" width="36" height="26"><use href="#new"/></svg><svg style="left:1165px;top:1px" width="36" height="26"><use href="#prn"/></svg><svg style="left:1198px;top:1px" width="36" height="26"><use href="#tr"/></svg></div>
<div id="pag"></div>
<div class="abs" style="left:56px;top:770px;width:105px;height:26px;background:#eee"></div>
<svg style="left:15px;top:777px" width="13" height="12" viewBox="0 0 13 12"><path fill="#222" d="M0 0h2.500v12H0zM12.500 0v12L3 6z"/></svg>
<svg style="left:40px;top:777px" width="11" height="12" viewBox="0 0 11 12"><path fill="#222" d="M10.500 0v12L0.500 6z"/></svg>
<svg style="left:1118px;top:777px" width="11" height="12" viewBox="0 0 11 12"><path fill="#2a2a2a" d="M0.500 0v12L10.500 6z"/></svg>
<svg style="left:1140px;top:777px" width="13" height="12" viewBox="0 0 13 12"><path fill="#222" d="M10.500 0h2.500v12h-2.500zM0.500 0v12L10 6z"/></svg>
<span class="t" style="left:104.5px;top:773.4px;font-size:12.5px;line-height:20px;color:#fff;letter-spacing:0.87px;font-weight:bold;transform:scaleX(1.15);transform-origin:0 0;-webkit-text-stroke:.4px #fff;">1</span>
<span class="t" style="left:209.5px;top:773.4px;font-size:12.5px;line-height:20px;color:#fff;letter-spacing:0.87px;font-weight:bold;transform:scaleX(1.15);transform-origin:0 0;-webkit-text-stroke:.4px #fff;">2</span>
<span class="t" style="left:315.5px;top:773.4px;font-size:12.5px;line-height:20px;color:#fff;letter-spacing:0.87px;font-weight:bold;transform:scaleX(1.15);transform-origin:0 0;-webkit-text-stroke:.4px #fff;">3</span>
<span class="t" style="left:420.5px;top:773.4px;font-size:12.5px;line-height:20px;color:#fff;letter-spacing:0.87px;font-weight:bold;transform:scaleX(1.15);transform-origin:0 0;-webkit-text-stroke:.4px #fff;">4</span>
<span class="t" style="left:526.5px;top:773.4px;font-size:12.5px;line-height:20px;color:#fff;letter-spacing:0.87px;font-weight:bold;transform:scaleX(1.15);transform-origin:0 0;-webkit-text-stroke:.4px #fff;">5</span>
<span class="t" style="left:631.5px;top:773.4px;font-size:12.5px;line-height:20px;color:#fff;letter-spacing:0.87px;font-weight:bold;transform:scaleX(1.15);transform-origin:0 0;-webkit-text-stroke:.4px #fff;">6</span>
<span class="t" style="left:1179.0px;top:773.4px;font-size:12.5px;line-height:20px;color:#fff;letter-spacing:1.55px;font-weight:bold;transform:scaleX(1.1);transform-origin:0 0;-webkit-text-stroke:.4px #fff;">6P/115R</span>
<svg class="ann" style="left:0;top:0;filter:drop-shadow(3px 3px 2.500px rgba(0,0,0,.5))" width="1271" height="832"><rect x="8.95" y="56.95" width="1129.70" height="136.00" fill="none" stroke="#c00000" stroke-width="1.9"/></svg>
<svg class="ann" style="left:0;top:0;filter:drop-shadow(3px 3px 2px rgba(0,0,0,.4))" width="1271" height="832"><rect x="42.20" y="201.90" width="162.90" height="564.30" fill="none" stroke="#000080" stroke-width="2"/></svg>
<svg class="ann" style="left:0;top:0;filter:drop-shadow(3px 3px 2px rgba(0,0,0,.4))" width="1271" height="832"><rect x="814.20" y="197.20" width="139.80" height="566.80" fill="none" stroke="#000" stroke-width="2.2"/></svg>
<svg class="ann" style="left:0;top:0;filter:drop-shadow(3px 3px 2px rgba(0,0,0,.4))" width="1271" height="832"><rect x="1144.30" y="407.30" width="26.60" height="23.90" fill="none" stroke="#9966cc" stroke-width="2"/></svg>
<svg class="ann" style="left:0;top:0;filter:drop-shadow(3px 3px 2px rgba(0,0,0,.4))" width="1271" height="832"><rect x="1174.15" y="484.35" width="33.90" height="27.10" fill="none" stroke="#008000" stroke-width="2.1"/></svg>
<svg class="ann" style="left:0;top:0;filter:drop-shadow(3px 3px 2px rgba(0,0,0,.4))" width="1271" height="832"><rect x="1213.05" y="586.15" width="29.00" height="28.60" fill="none" stroke="#ff9900" stroke-width="1.9"/></svg>
<svg class="ann" style="left:0;top:0;filter:drop-shadow(3px 3px 1.500px rgba(0,0,0,.45))" width="1271" height="832"><path d="M1143.5 430.5L1081.9 470.5" stroke="#9966cc" stroke-width="2.7"/><polygon points="1070.0,478.2 1078.1,464.6 1085.7,476.3" fill="#9966cc"/></svg>
<svg class="ann" style="left:0;top:0;filter:drop-shadow(3px 3px 1.500px rgba(0,0,0,.45))" width="1271" height="832"><path d="M1174.2 511.4L1080.6 577.0" stroke="#008000" stroke-width="2.7"/><polygon points="1068.8,585.3 1076.6,571.2 1084.6,582.7" fill="#008000"/></svg>
<svg class="ann" style="left:0;top:0;filter:drop-shadow(3px 3px 1.500px rgba(0,0,0,.45))" width="1271" height="832"><path d="M1212.5 613.8L1122.3 642.7" stroke="#ff9900" stroke-width="2.7"/><polygon points="1109.4,646.9 1120.2,636.1 1124.5,649.4" fill="#ff9900"/></svg>
<div class="callout" style="left:538.3px;top:481.1px;width:572.5px;height:34.4px"></div><svg style="left:0;top:0" width="1271" height="832"><rect x="539.15" y="481.95" width="570.80" height="32.70" fill="none" stroke="#9933ff" stroke-width="1.7"/></svg>
<span class="t" style="left:544.2px;top:485.0px;font-size:19.6px;line-height:24px;color:#000;letter-spacing:0.13px;font-weight:bold;">Agregar una Nueva oportunidad al cliente / propecto actual</span>
<div class="callout" style="left:657.3px;top:579.5px;width:406.6px;height:33.7px"></div><svg style="left:0;top:0" width="1271" height="832"><rect x="657.95" y="580.15" width="405.30" height="32.40" fill="none" stroke="#38761d" stroke-width="1.3"/></svg>
<span class="t" style="left:675.5px;top:582.8px;font-size:19.6px;line-height:24px;color:#000;letter-spacing:0.03px;font-weight:bold;">Abrir la pantalla formatos de impresión</span>
<div class="callout" style="left:759.2px;top:643.2px;width:350.3px;height:36.0px"></div><svg style="left:0;top:0" width="1271" height="832"><rect x="759.85" y="643.85" width="349.00" height="34.70" fill="none" stroke="#f79646" stroke-width="1.3"/></svg>
<span class="t" style="left:763.8px;top:647.0px;font-size:19.6px;line-height:24px;color:#000;letter-spacing:-0.04px;font-weight:bold;">Elimina la oportunidad seleccionada</span>
</div></body></html>
